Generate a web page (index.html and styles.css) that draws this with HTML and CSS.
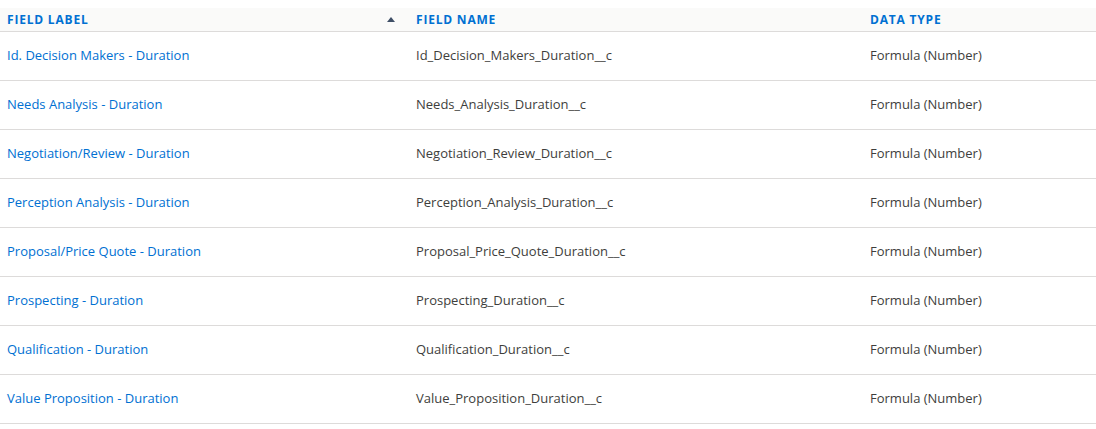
FILE: index.html
```html
<!DOCTYPE html>
<html lang="en">

<head>
    <meta charset="UTF-8">
    <title>Fields</title>
    <link rel="stylesheet" href="styles.css">
</head>

<body>
    <table class="fields-table">
        <colgroup>
            <col class="col-label">
            <col class="col-name">
            <col class="col-type">
        </colgroup>
        <thead>
            <tr>
                <th class="sorted">
                    <span>Field Label</span>
                    <span class="sort-arrow"></span>
                </th>
                <th>Field Name</th>
                <th>Data Type</th>
            </tr>
        </thead>
        <tbody>
            <tr>
                <td><a href="#">Id. Decision Makers - Duration</a></td>
                <td>Id_Decision_Makers_Duration__c</td>
                <td>Formula (Number)</td>
            </tr>
            <tr>
                <td><a href="#">Needs Analysis - Duration</a></td>
                <td>Needs_Analysis_Duration__c</td>
                <td>Formula (Number)</td>
            </tr>
            <tr>
                <td><a href="#">Negotiation/Review - Duration</a></td>
                <td>Negotiation_Review_Duration__c</td>
                <td>Formula (Number)</td>
            </tr>
            <tr>
                <td><a href="#">Perception Analysis - Duration</a></td>
                <td>Perception_Analysis_Duration__c</td>
                <td>Formula (Number)</td>
            </tr>
            <tr>
                <td><a href="#">Proposal/Price Quote - Duration</a></td>
                <td>Proposal_Price_Quote_Duration__c</td>
                <td>Formula (Number)</td>
            </tr>
            <tr>
                <td><a href="#">Prospecting - Duration</a></td>
                <td>Prospecting_Duration__c</td>
                <td>Formula (Number)</td>
            </tr>
            <tr>
                <td><a href="#">Qualification - Duration</a></td>
                <td>Qualification_Duration__c</td>
                <td>Formula (Number)</td>
            </tr>
            <tr>
                <td><a href="#">Value Proposition - Duration</a></td>
                <td>Value_Proposition_Duration__c</td>
                <td>Formula (Number)</td>
            </tr>
        </tbody>
    </table>
</body>

</html>
```

FILE: styles.css
```css
body {
    margin: 0;
    padding-top: 8px;
    background: #fff;
    font-family: 'Open Sans', sans-serif;
    font-size: 13px;
    color: #3e3e3c;
}

.fields-table {
    width: 1096px;
    border-collapse: collapse;
    table-layout: fixed;
}

.col-label {
    width: 409px;
}

.col-name {
    width: 454px;
}

.col-type {
    width: 233px;
}

.fields-table th {
    height: 23px;
    padding: 0 7px;
    background-color: #fafaf9;
    border-bottom: 1px solid #dddbda;
    color: #0070d2;
    font-size: 12px;
    font-weight: 700;
    letter-spacing: 0.8px;
    text-transform: uppercase;
    text-align: left;
}

.fields-table th.sorted {
    position: relative;
}

.sort-arrow {
    position: absolute;
    right: 14px;
    top: 9px;
    width: 0;
    height: 0;
    border-left: 4px solid transparent;
    border-right: 4px solid transparent;
    border-bottom: 5px solid #3e4e66;
}

.fields-table td {
    height: 46px;
    padding: 0 7px 2px;
    border-bottom: 1px solid #dddbda;
    white-space: nowrap;
}

.fields-table a {
    color: #0070d2;
    text-decoration: none;
}
```
